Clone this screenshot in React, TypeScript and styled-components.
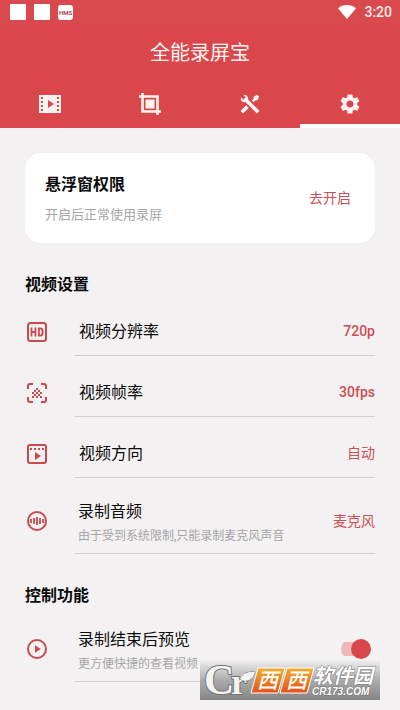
import React, { useState } from "react";
import styled, { createGlobalStyle } from "styled-components";
import { MdSettings } from "react-icons/md";

const GlobalStyle = createGlobalStyle`
  * { box-sizing: border-box; }
  body {
    margin: 0;
    background: #f3f1f2;
    font-family: Roboto, "Noto Sans CJK SC", sans-serif;
    color: #0c0c0c;
  }
  button {
    margin: 0;
    padding: 0;
    border: 0;
    background: none;
    font: inherit;
    cursor: pointer;
  }
  h1, h2, p { margin: 0; }
`;

const Page = styled.div`
  position: relative;
  min-height: 100vh;
  background: #f3f1f2;
`;

const Header = styled.header`
  background: #da474b;
  color: #fff;
`;

const StatusBar = styled.div`
  display: flex;
  align-items: center;
  justify-content: space-between;
  height: 24px;
  padding: 0 8px 0 10px;
  background: #d94a4e;
`;

const StatusGroup = styled.div`
  display: flex;
  align-items: center;
  gap: 8px;
`;

const Notice = styled.span`
  width: 16px;
  height: 16px;
  border-radius: 1px;
  background: #fff;
`;

const NoticeBadge = styled.span`
  width: 15px;
  height: 15px;
  border-radius: 3px;
  background: #fff;
  color: #a5484b;
  font-size: 6px;
  font-weight: 700;
  line-height: 15px;
  text-align: center;
`;

const Clock = styled.span`
  font-size: 14px;
  font-weight: 500;
  line-height: 24px;
  color: #ffeceb;
`;

const AppTitle = styled.h1`
  padding-top: 2px;
  font-size: 20px;
  font-weight: 400;
  line-height: 54px;
  text-align: center;
  color: #fff4f2;
`;

const Tabs = styled.nav`
  display: grid;
  grid-template-columns: repeat(4, 1fr);
`;

const Tab = styled.button<{ $active: boolean }>`
  display: flex;
  align-items: center;
  justify-content: center;
  height: 48px;
  padding-top: 4px;
  border-bottom: 4px solid ${(p) => (p.$active ? "#fff" : "transparent")};
  color: #fff4f2;
`;

const Main = styled.main`
  padding: 25px 25px 28px;
`;

const Card = styled.section`
  display: flex;
  align-items: center;
  justify-content: space-between;
  min-height: 90px;
  padding: 0 24px 0 20px;
  border-radius: 16px;
  background: #fff;
`;

const CardText = styled.div`
  display: flex;
  flex-direction: column;
  gap: 9px;
`;

const CardTitle = styled.h2`
  font-size: 16px;
  font-weight: 700;
  line-height: 24px;
`;

const CardNote = styled.p`
  font-size: 13px;
  line-height: 18px;
  color: #a6a6a6;
`;

const ValueButton = styled.button<{ $latin?: boolean }>`
  font-size: 14px;
  font-weight: ${(p) => (p.$latin ? 500 : 400)};
  line-height: 20px;
  color: #cb4f56;
`;

const SectionTitle = styled.h2`
  padding-top: 32px;
  font-size: 16px;
  font-weight: 700;
  line-height: 20px;
`;

const Row = styled.div`
  display: flex;
  padding-top: 12px;
`;

const IconSlot = styled.div<{ $tall?: boolean }>`
  display: flex;
  align-items: center;
  width: 50px;
  padding: ${(p) => (p.$tall ? "0 0 3px 2px" : "1px 0 0 2px")};
  color: #c9494e;
`;

const RowBody = styled.div<{ $tall?: boolean }>`
  flex: 1;
  display: flex;
  align-items: center;
  justify-content: space-between;
  min-height: ${(p) => (p.$tall ? 64 : 49)}px;
  padding: 0 0 ${(p) => (p.$tall ? 2 : 0)}px ${(p) => (p.$tall ? 3 : 4)}px;
  border-bottom: 1px solid #cfcdcf;
`;

const RowText = styled.div<{ $tall?: boolean }>`
  display: flex;
  flex-direction: column;
  gap: 4px;
  padding-top: ${(p) => (p.$tall ? 4 : 2)}px;
`;

const RowLabel = styled.label`
  font-size: 16px;
  line-height: 22px;
`;

const RowNote = styled.p`
  font-size: 12px;
  line-height: 18px;
  color: #a6a5a6;
`;

const Toggle = styled.input`
  appearance: none;
  display: flex;
  align-items: center;
  width: 30px;
  height: 20px;
  margin: 0 4px 0 0;
  background: linear-gradient(#efb9bc, #efb9bc) 0 3px / 26px 14px no-repeat;
  border-radius: 10px;
  cursor: pointer;

  &::before {
    content: "";
    width: 20px;
    height: 20px;
    border-radius: 50%;
    background: #d9474b;
  }

  &:checked::before {
    margin-left: auto;
  }
`;

const Watermark = styled.div`
  position: absolute;
  right: 20px;
  bottom: 10px;
  height: 40px;
  pointer-events: none;
  background: linear-gradient(rgba(235, 235, 235, 0.3), rgba(165, 165, 165, 0.9) 50%, #858585);
`;

const LogoSvg = styled.svg`
  display: block;
  overflow: visible;
`;

const WifiIcon = () => (
  <svg width="18" height="14" viewBox="0 0 18 14" aria-hidden="true">
    <path d="M0 3.4C5.2-1 12.8-1 18 3.4L9 14z" fill="#fff" />
  </svg>
);

const FilmIcon = () => (
  <svg width="22" height="18" viewBox="0 0 22 18" aria-hidden="true">
    <path
      fill="currentColor"
      fillRule="evenodd"
      d="M0 0h22v18H0zM2 2v2h2V2zM2 6v2h2V6zM2 10v2h2v-2zM2 14v2h2v-2zM18 2v2h2V2zM18 6v2h2V6zM18 10v2h2v-2zM18 14v2h2v-2zM9 5v8l6-4z"
    />
  </svg>
);

const CropIcon = () => (
  <svg width="22" height="22" viewBox="0 0 22 22" aria-hidden="true">
    <path d="M3.5 0v18.5H22M0 3.5h18.5V22" fill="none" stroke="currentColor" strokeWidth="2.6" />
    <path d="M6.5 6.5h9v9h-9z" fill="currentColor" />
  </svg>
);

const ToolsIcon = () => (
  <svg width="22" height="22" viewBox="0 0 24 24" aria-hidden="true">
    <path
      fill="currentColor"
      d="M21.71 20.29L20.29 21.71A1 1 0 0 1 18.88 21.71L7 9.85A3.81 3.81 0 0 1 6 10A4 4 0 0 1 2.22 4.7L4.76 7.24L5.29 6.71L6.71 5.29L7.24 4.76L4.7 2.22A4 4 0 0 1 10 6A3.81 3.81 0 0 1 9.85 7L21.71 18.88A1 1 0 0 1 21.71 20.29M2.29 18.88A1 1 0 0 0 2.29 20.29L3.71 21.71A1 1 0 0 0 5.12 21.71L10.59 16.25L7.76 13.42M20 2L16 4V6L13.83 8.17L15.83 10.17L18 8H20L22 4Z"
    />
  </svg>
);

const HdIcon = () => (
  <svg width="20" height="20" viewBox="0 0 20 20" fill="none" stroke="currentColor" aria-hidden="true">
    <rect x="1" y="1" width="18" height="18" rx="2.5" strokeWidth="2" />
    <path d="M4.5 5.5v9M8.5 5.5v9M4.5 10h4M11.9 6.4v7.2h1.4c1.6 0 2.4-1.3 2.4-3.6s-.8-3.6-2.4-3.6z" strokeWidth="1.8" />
  </svg>
);

const FrameRateIcon = () => (
  <svg width="20" height="20" viewBox="0 0 20 20" aria-hidden="true">
    <path
      d="M1 6V3a2 2 0 0 1 2-2h3M14 1h3a2 2 0 0 1 2 2v3M19 14v3a2 2 0 0 1-2 2h-3M6 19H3a2 2 0 0 1-2-2v-3"
      fill="none"
      stroke="currentColor"
      strokeWidth="2"
    />
    <path
      fill="currentColor"
      d="M9 5h2v2H9zM7 7h2v2H7zM11 7h2v2h-2zM9 9h2v2H9zM5 9h2v2H5zM13 9h2v2h-2zM7 11h2v2H7zM11 11h2v2h-2zM5 13h2v2H5zM9 13h2v2H9zM13 13h2v2h-2z"
    />
  </svg>
);

const DirectionIcon = () => (
  <svg width="20" height="20" viewBox="0 0 20 20" aria-hidden="true">
    <rect x="1" y="1" width="18" height="18" rx="2" fill="none" stroke="currentColor" strokeWidth="2" />
    <path fill="currentColor" d="M3 4h2v2H3zM7 4h2v2H7zM11 4h2v2h-2zM15 4h2v2h-2zM8 8v8l6-4z" />
  </svg>
);

const AudioIcon = () => (
  <svg width="20" height="20" viewBox="0 0 20 20" fill="none" stroke="currentColor" aria-hidden="true">
    <circle cx="10" cy="10" r="9" strokeWidth="2" />
    <path d="M4 8v4M7 7v6M10 6v8M13 7v6M16 8v4" strokeWidth="1.8" />
  </svg>
);

const PreviewIcon = () => (
  <svg width="20" height="20" viewBox="0 0 20 20" aria-hidden="true">
    <circle cx="10" cy="10" r="9" fill="none" stroke="currentColor" strokeWidth="2" />
    <path d="M8 6.2v7.6l5.8-3.8z" fill="currentColor" />
  </svg>
);

const SiteLogo = () => (
  <LogoSvg width="180" height="40" viewBox="0 0 180 40" role="img" aria-label="Cr 西西软件园 CR173.COM">
    <defs>
      <linearGradient id="tile" x1="0" y1="0" x2="0" y2="1">
        <stop offset="0" stopColor="#f3ad2c" />
        <stop offset="1" stopColor="#e5521c" />
      </linearGradient>
    </defs>
    <g fill="#f4f4f4" stroke="#747474" strokeWidth="2" paintOrder="stroke" fontFamily='"Liberation Serif", serif'>
      <text x="4" y="34" fontSize="42" fontWeight="700">C</text>
      <text x="31" y="34" fontSize="36" fontWeight="700">r</text>
      <path d="M40 19C43 12 49 12 55 12C53 20 46 23 40 19z" strokeWidth="1" />
    </g>
    <g fill="url(#tile)" stroke="#fff" strokeWidth="1">
      <path d="M58 8h27l-7 25H51z" />
      <path d="M87 8h27l-7 25H80z" />
    </g>
    <g fill="#fff" fontFamily='"Noto Sans CJK SC", sans-serif' fontWeight="500" fontStyle="italic">
      <text x="57" y="28" fontSize="21">西</text>
      <text x="86" y="28" fontSize="21">西</text>
      <text x="113" y="23" fontSize="20" fontWeight="700" stroke="#777" strokeWidth="1" paintOrder="stroke">软件园</text>
      <text
        x="112"
        y="35"
        fontSize="10"
        fontWeight="700"
        fontFamily='"Liberation Sans", sans-serif'
        stroke="#777"
        strokeWidth="1"
        paintOrder="stroke"
      >
        CR173.COM
      </text>
    </g>
  </LogoSvg>
);

const tabs = [
  { name: "视频", icon: <FilmIcon /> },
  { name: "裁剪", icon: <CropIcon /> },
  { name: "工具", icon: <ToolsIcon /> },
  { name: "设置", icon: <MdSettings size={24} /> },
];

const videoSettings = [
  { id: "resolution", label: "视频分辨率", value: "720p", latin: true, icon: <HdIcon /> },
  { id: "fps", label: "视频帧率", value: "30fps", latin: true, icon: <FrameRateIcon /> },
  { id: "direction", label: "视频方向", value: "自动", icon: <DirectionIcon /> },
  { id: "audio", label: "录制音频", value: "麦克风", icon: <AudioIcon />, note: "由于受到系统限制,只能录制麦克风声音" },
];

export default function App() {
  const [active, setActive] = useState(3);
  const [preview, setPreview] = useState(true);

  return (
    <>
      <GlobalStyle />
      <Page>
        <Header>
          <StatusBar>
            <StatusGroup>
              <Notice />
              <Notice />
              <NoticeBadge>HMS</NoticeBadge>
            </StatusGroup>
            <StatusGroup>
              <WifiIcon />
              <Clock>3:20</Clock>
            </StatusGroup>
          </StatusBar>
          <AppTitle>全能录屏宝</AppTitle>
          <Tabs>
            {tabs.map((tab, i) => (
              <Tab key={tab.name} type="button" aria-label={tab.name} $active={i === active} onClick={() => setActive(i)}>
                {tab.icon}
              </Tab>
            ))}
          </Tabs>
        </Header>
        <Main>
          <Card>
            <CardText>
              <CardTitle>悬浮窗权限</CardTitle>
              <CardNote>开启后正常使用录屏</CardNote>
            </CardText>
            <ValueButton type="button">去开启</ValueButton>
          </Card>
          <SectionTitle>视频设置</SectionTitle>
          {videoSettings.map((item) => {
            const tall = Boolean(item.note);
            return (
              <Row key={item.id}>
                <IconSlot $tall={tall}>{item.icon}</IconSlot>
                <RowBody $tall={tall}>
                  <RowText $tall={tall}>
                    <RowLabel htmlFor={item.id}>{item.label}</RowLabel>
                    {item.note && <RowNote>{item.note}</RowNote>}
                  </RowText>
                  <ValueButton id={item.id} type="button" $latin={item.latin}>
                    {item.value}
                  </ValueButton>
                </RowBody>
              </Row>
            );
          })}
          <SectionTitle>控制功能</SectionTitle>
          <Row>
            <IconSlot $tall>
              <PreviewIcon />
            </IconSlot>
            <RowBody $tall>
              <RowText $tall>
                <RowLabel htmlFor="preview">录制结束后预览</RowLabel>
                <RowNote>更方便快捷的查看视频</RowNote>
              </RowText>
              <Toggle id="preview" type="checkbox" checked={preview} onChange={(e) => setPreview(e.target.checked)} />
            </RowBody>
          </Row>
        </Main>
        <Watermark>
          <SiteLogo />
        </Watermark>
      </Page>
    </>
  );
}
